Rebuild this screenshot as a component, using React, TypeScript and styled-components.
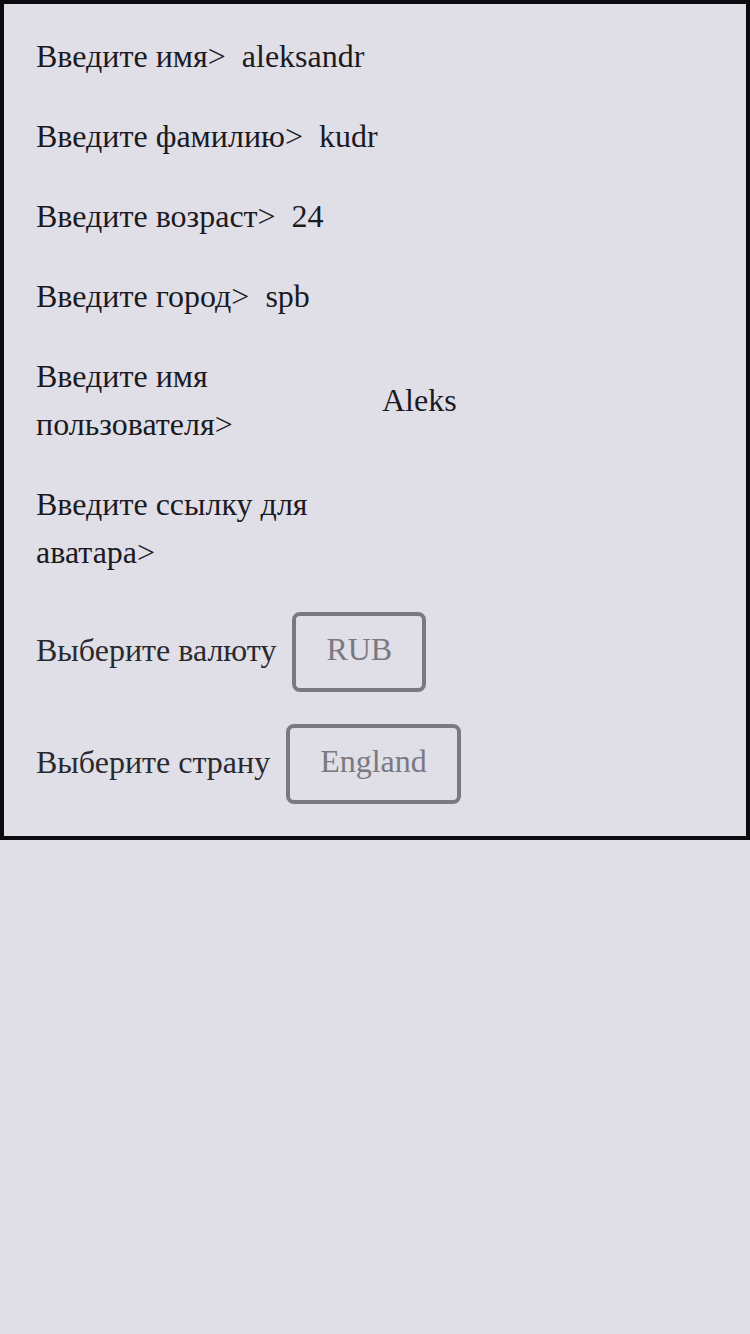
import React from 'react';
import styled, { createGlobalStyle } from 'styled-components';

interface Field {
    label: string;
    value: string;
}

const fields: Field[] = [
    { label: 'Введите имя>', value: 'aleksandr' },
    { label: 'Введите фамилию>', value: 'kudr' },
    { label: 'Введите возраст>', value: '24' },
    { label: 'Введите город>', value: 'spb' },
    { label: 'Введите имя пользователя>', value: 'Aleks' },
    { label: 'Введите ссылку для аватара>', value: '' },
];

const App: React.FC = () => {
    return (
        <>
            <GlobalStyle />
            <Form>
                {fields.map((field) => (
                    <Row key={field.label}>
                        <Label>{field.label}</Label>
                        <Input defaultValue={field.value} />
                    </Row>
                ))}
                <SelectRow $offset={4}>
                    <SelectLabel>Выберите валюту</SelectLabel>
                    <SelectButton type="button">RUB</SelectButton>
                </SelectRow>
                <SelectRow>
                    <SelectLabel>Выберите страну</SelectLabel>
                    <SelectButton type="button">England</SelectButton>
                </SelectRow>
            </Form>
        </>
    );
};

const GlobalStyle = createGlobalStyle`
  html, body {
    margin: 0;
    padding: 0;
    background-color: #e0dfe8;
    min-height: 100%;
  }

  body {
    font-family: "Liberation Serif", "Times New Roman", serif;
  }
`;

const Form = styled.div`
  display: flex;
  flex-direction: column;
  gap: 32px;
  width: 750px;
  box-sizing: border-box;
  border: 4px solid #0c0b10;
  padding: 28px 32px 32px;
  background-color: #e0dfe8;
`;

const Row = styled.div`
  display: flex;
  align-items: center;
  gap: 16px;
`;

const Label = styled.span`
  flex: 0 1 auto;
  font-family: "Liberation Serif", "Times New Roman", serif;
  font-size: 32px;
  line-height: 48px;
  color: #1b1a1f;
`;

const Input = styled.input`
  flex: 0 0 332px;
  width: 332px;
  height: 48px;
  padding: 0;
  border: none;
  outline: none;
  background: transparent;
  font-family: "Liberation Serif", "Times New Roman", serif;
  font-size: 32px;
  line-height: 48px;
  color: #1b1a1f;
`;

const SelectRow = styled.div<{ $offset?: number }>`
  display: flex;
  align-items: center;
  gap: 16px;
  margin-top: ${(p) => p.$offset ?? 0}px;
`;

const SelectLabel = styled.span`
  font-family: "Liberation Serif", "Times New Roman", serif;
  font-size: 32px;
  line-height: 48px;
  padding-bottom: 4px;
  color: #2a292e;
`;

const SelectButton = styled.button`
  box-sizing: border-box;
  height: 80px;
  padding: 16px 30px 21px;
  border: 4px solid #7a7980;
  border-radius: 8px;
  background: transparent;
  font-family: "Liberation Serif", "Times New Roman", serif;
  font-size: 32px;
  line-height: 35px;
  color: #7a7980;
  cursor: pointer;
`;

export default App;
